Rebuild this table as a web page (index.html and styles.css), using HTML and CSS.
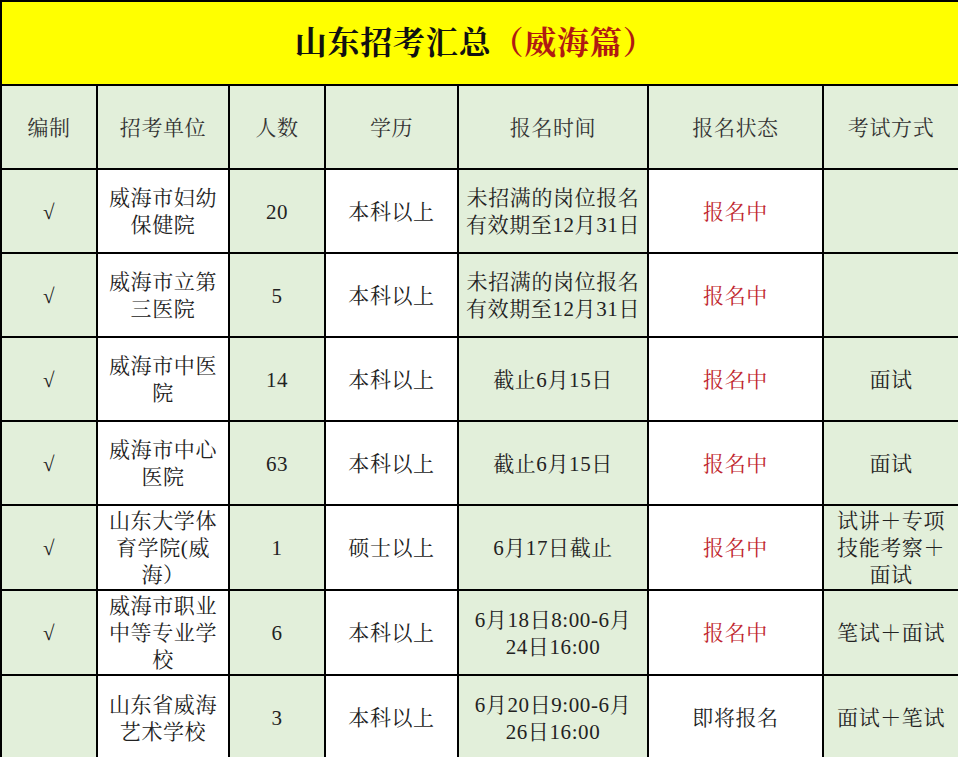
FILE: index.html
```html
<!DOCTYPE html>
<html lang="zh-CN">
<head>
<meta charset="utf-8">
<title>山东招考汇总（威海篇）</title>
<link rel="stylesheet" href="styles.css">
</head>
<body>
<table class="sheet">
  <colgroup>
    <col class="c1"><col class="c2"><col class="c3"><col class="c4"><col class="c5"><col class="c6"><col class="c7">
  </colgroup>
  <thead>
    <tr class="title-row">
      <th colspan="7" class="title"><span class="title-main">山东招考汇总</span><span class="title-sub">（威海篇）</span></th>
    </tr>
    <tr class="head-row">
      <th>编制</th><th>招考单位</th><th>人数</th><th>学历</th><th>报名时间</th><th>报名状态</th><th>考试方式</th>
    </tr>
  </thead>
  <tbody>
    <tr>
      <td class="g">√</td><td>威海市妇幼<br>保健院</td><td class="g">20</td><td>本科以上</td><td class="g">未招满的岗位报名<br>有效期至12月31日</td><td class="red">报名中</td><td class="g"></td>
    </tr>
    <tr>
      <td class="g">√</td><td>威海市立第<br>三医院</td><td class="g">5</td><td>本科以上</td><td class="g">未招满的岗位报名<br>有效期至12月31日</td><td class="red">报名中</td><td class="g"></td>
    </tr>
    <tr>
      <td class="g">√</td><td>威海市中医<br>院</td><td class="g">14</td><td>本科以上</td><td class="g">截止6月15日</td><td class="red">报名中</td><td class="g">面试</td>
    </tr>
    <tr>
      <td class="g">√</td><td>威海市中心<br>医院</td><td class="g">63</td><td>本科以上</td><td class="g">截止6月15日</td><td class="red">报名中</td><td class="g">面试</td>
    </tr>
    <tr>
      <td class="g">√</td><td>山东大学体<br>育学院(威<br>海）</td><td class="g">1</td><td>硕士以上</td><td class="g">6月17日截止</td><td class="red">报名中</td><td class="g">试讲＋专项<br>技能考察＋<br>面试</td>
    </tr>
    <tr>
      <td class="g">√</td><td>威海市职业<br>中等专业学<br>校</td><td class="g">6</td><td>本科以上</td><td class="g">6月18日8:00-6月<br>24日16:00</td><td class="red">报名中</td><td class="g">笔试＋面试</td>
    </tr>
    <tr class="last">
      <td class="g"></td><td>山东省威海<br>艺术学校</td><td class="g">3</td><td>本科以上</td><td class="g">6月20日9:00-6月<br>26日16:00</td><td>即将报名</td><td class="g">面试＋笔试</td>
    </tr>
  </tbody>
</table>
</body>
</html>
```

FILE: styles.css
```css
html, body {
  margin: 0;
  padding: 0;
  background: #ffffff;
}

.sheet {
  width: 958px;
  border-collapse: collapse;
  table-layout: fixed;
  font-family: "Liberation Serif", "Noto Serif CJK SC", "Noto Sans CJK SC", serif;
  color: #222222;
}

.c1 { width: 96px; }
.c2 { width: 132px; }
.c3 { width: 96px; }
.c4 { width: 133px; }
.c5 { width: 190px; }
.c6 { width: 175px; }
.c7 { width: 136px; }

.sheet th,
.sheet td {
  border: 2px solid #000000;
  padding: 2px 2px 0;
  height: 80px;
  text-align: center;
  vertical-align: middle;
  font-size: 21px;
  line-height: 27px;
  letter-spacing: 0.6px;
  font-weight: normal;
  background: #ffffff;
  white-space: nowrap;
}

.sheet .title {
  background: #ffff00;
  font-size: 32px;
  font-weight: bold;
  letter-spacing: 0.8px;
  height: 82px;
  padding: 0 10px 0 0;
}

.title-main {
  color: #111111;
}

.title-sub {
  color: #b01a12;
}

.head-row th {
  background: #e2efda;
  color: #333333;
  line-height: 28px;
}

.sheet td.g {
  background: #e2efda;
}

.sheet td.red {
  color: #c0252d;
}

.sheet tr.last td {
  height: 81px;
}
```
